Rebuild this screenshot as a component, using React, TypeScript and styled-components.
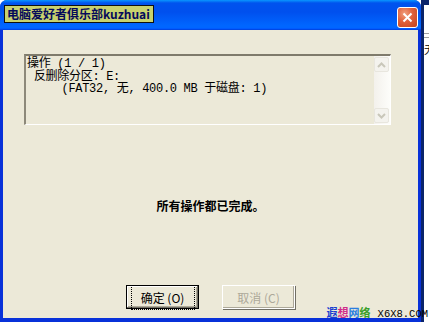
import React from "react";
import styled, { createGlobalStyle } from "styled-components";

const Global = createGlobalStyle`
  html, body { margin: 0; padding: 0; background: #fff; }
  body { width: 429px; height: 322px; overflow: hidden; }
`;

const Screen = styled.div`
  position: relative;
  display: grid;
  grid-template-columns: 421px 8px;
  width: 429px;
  height: 322px;
  overflow: hidden;
  font-family: "Noto Sans CJK SC", "DejaVu Sans", sans-serif;
`;

const Window = styled.div`
  display: flex;
  flex-direction: column;
  height: 322px;
  background: #0831d9;
  border-radius: 7px 7px 0 0;
  overflow: hidden;
`;

const TitleBar = styled.div`
  display: flex;
  align-items: center;
  justify-content: space-between;
  height: 30px;
  padding: 0 3px 0 4px;
  background: linear-gradient(
    #0997ff 0,
    #0053ee 10%,
    #0050ee 40%,
    #0066ff 85%,
    #0066ff 92%,
    #005bff 95%,
    #003dd7 100%
  );
  flex-shrink: 0;
`;

const TitleLabel = styled.div`
  display: flex;
  align-items: center;
  height: 16px;
  padding: 0 3px 0 2px;
  margin-top: -3px;
  background: #c8d26e;
  border: 1px solid #101010;
  color: #050a5a;
  font-size: 12px;
  font-weight: 700;
  line-height: 16px;
  white-space: nowrap;
`;

const CloseButton = styled.div`
  display: flex;
  align-items: center;
  justify-content: center;
  width: 19px;
  height: 19px;
  margin-top: 4px;
  border: 1px solid #fff;
  border-radius: 3px;
  background: radial-gradient(circle at 35% 30%, #f0a080 0, #e0603a 45%, #c2421c 100%);
`;

const Client = styled.div`
  flex: 1;
  display: flex;
  flex-direction: column;
  align-items: center;
  margin: 0 3px 4px 3px;
  padding-top: 24px;
  background: #ece9d8;
`;

const ListBox = styled.div`
  display: flex;
  width: 367px;
  height: 71px;
  box-sizing: border-box;
  margin-left: -6px;
  background: #ece9d8;
  border-top: 2px solid #7f7b6c;
  border-left: 2px solid #8d897a;
  border-right: 1px solid #fff;
  border-bottom: 1px solid #fff;
`;

const ListText = styled.pre`
  flex: 1;
  margin: 0;
  padding: 2px 0 0 1px;
  font-family: "Liberation Mono", "Noto Sans CJK SC", monospace;
  font-size: 12px;
  line-height: 12.5px;
  color: #000;
  letter-spacing: -0.3px;
`;

const ScrollBar = styled.div`
  display: flex;
  flex-direction: column;
  justify-content: space-between;
  width: 16px;
  padding: 1px 0;
  background: linear-gradient(90deg, #f3f1ec, #fdfdfa);
`;

const ArrowButton = styled.div`
  display: flex;
  align-items: center;
  justify-content: center;
  width: 15px;
  height: 15px;
  box-sizing: border-box;
  border: 1px solid #e8e6de;
  border-radius: 2px;
  background: #f4f3ee;
`;

const Message = styled.div`
  margin-top: 72px;
  font-size: 12px;
  font-weight: 700;
  color: #000;
`;

const ButtonRow = styled.div`
  display: flex;
  gap: 23px;
  margin-top: 71px;
`;

const Button = styled.div<{ $disabled?: boolean; $default?: boolean }>`
  display: flex;
  align-items: center;
  justify-content: center;
  width: 73px;
  height: 24px;
  box-sizing: border-box;
  font-size: 12px;
  color: ${(p) => (p.$disabled ? "#aca899" : "#000")};
  background: #ece9d8;
  border: 1px solid ${(p) => (p.$default ? "#000" : "#fff")};
  box-shadow: ${(p) =>
    p.$default
      ? "inset -1px -1px #716f64, inset 1px 1px #fff, inset -2px -2px #aca899"
      : "inset -1px -1px #aca899, 1px 1px #716f64"};
`;

const Focus = styled.span`
  padding: 1px 0;
  outline: 1px dotted #000;
  outline-offset: 2px;
  width: 58px;
  text-align: center;
`;

const Watermark = styled.div`
  position: absolute;
  right: 1px;
  bottom: 1px;
  display: flex;
  align-items: baseline;
  gap: 7px;
  font-size: 11px;
  font-weight: 700;
  line-height: 14px;
`;

const Mark = styled.span<{ $c: string }>`
  color: ${(p) => p.$c};
`;

const MarkLatin = styled.span`
  font-family: "Liberation Mono", monospace;
  font-size: 10.5px;
  font-weight: 400;
  color: #000;
`;

const Side = styled.div`
  display: flex;
  flex-direction: column;
  background: #fff;
  border-left: 3px solid #0a246a;
`;

const SideTop = styled.div`
  height: 5px;
  background: #0a246a;
`;

const SideRule = styled.div`
  height: 3px;
  margin-top: 28px;
  border-top: 1px solid #a0a0a0;
  border-bottom: 1px solid #a0a0a0;
`;

const SideBody = styled.div`
  flex: 1;
  font-size: 11px;
  line-height: 12px;
  overflow: hidden;
  margin-top: 5px;
`;

function Arrow({ up }: { up?: boolean }) {
  return (
    <svg width="9" height="6" viewBox="0 0 9 6">
      <path
        d={up ? "M1 5 L4.5 1.5 L8 5" : "M1 1 L4.5 4.5 L8 1"}
        fill="none"
        stroke="#c9c7ba"
        strokeWidth="2"
      />
    </svg>
  );
}

export default function App() {
  return (
    <>
      <Global />
      <Screen>
        <Window>
          <TitleBar>
            <TitleLabel>电脑爱好者俱乐部kuzhuai</TitleLabel>
            <CloseButton>
              <svg width="11" height="11" viewBox="0 0 11 11">
                <path d="M1.5 1.5 L9.5 9.5 M9.5 1.5 L1.5 9.5" stroke="#fff" strokeWidth="2" />
              </svg>
            </CloseButton>
          </TitleBar>
          <Client>
            <ListBox>
              <ListText>
                {"操作 (1 / 1)\n 反删除分区: E:\n     (FAT32, 无, 400.0 MB 于磁盘: 1)"}
              </ListText>
              <ScrollBar>
                <ArrowButton>
                  <Arrow up />
                </ArrowButton>
                <ArrowButton>
                  <Arrow />
                </ArrowButton>
              </ScrollBar>
            </ListBox>
            <Message>所有操作都已完成。</Message>
            <ButtonRow>
              <Button $default>
                <Focus>确定 (O)</Focus>
              </Button>
              <Button $disabled>取消 (C)</Button>
            </ButtonRow>
          </Client>
        </Window>
        <Side>
          <SideTop />
          <SideRule />
          <SideBody>无</SideBody>
        </Side>
        <Watermark>
          <span>
            <Mark $c="#1a3fd0">遐</Mark>
            <Mark $c="#d02a8a">想</Mark>
            <Mark $c="#2a7ee0">网</Mark>
            <Mark $c="#3aa02a">络</Mark>
          </span>
          <MarkLatin>X6X8.COM</MarkLatin>
        </Watermark>
      </Screen>
    </>
  );
}
